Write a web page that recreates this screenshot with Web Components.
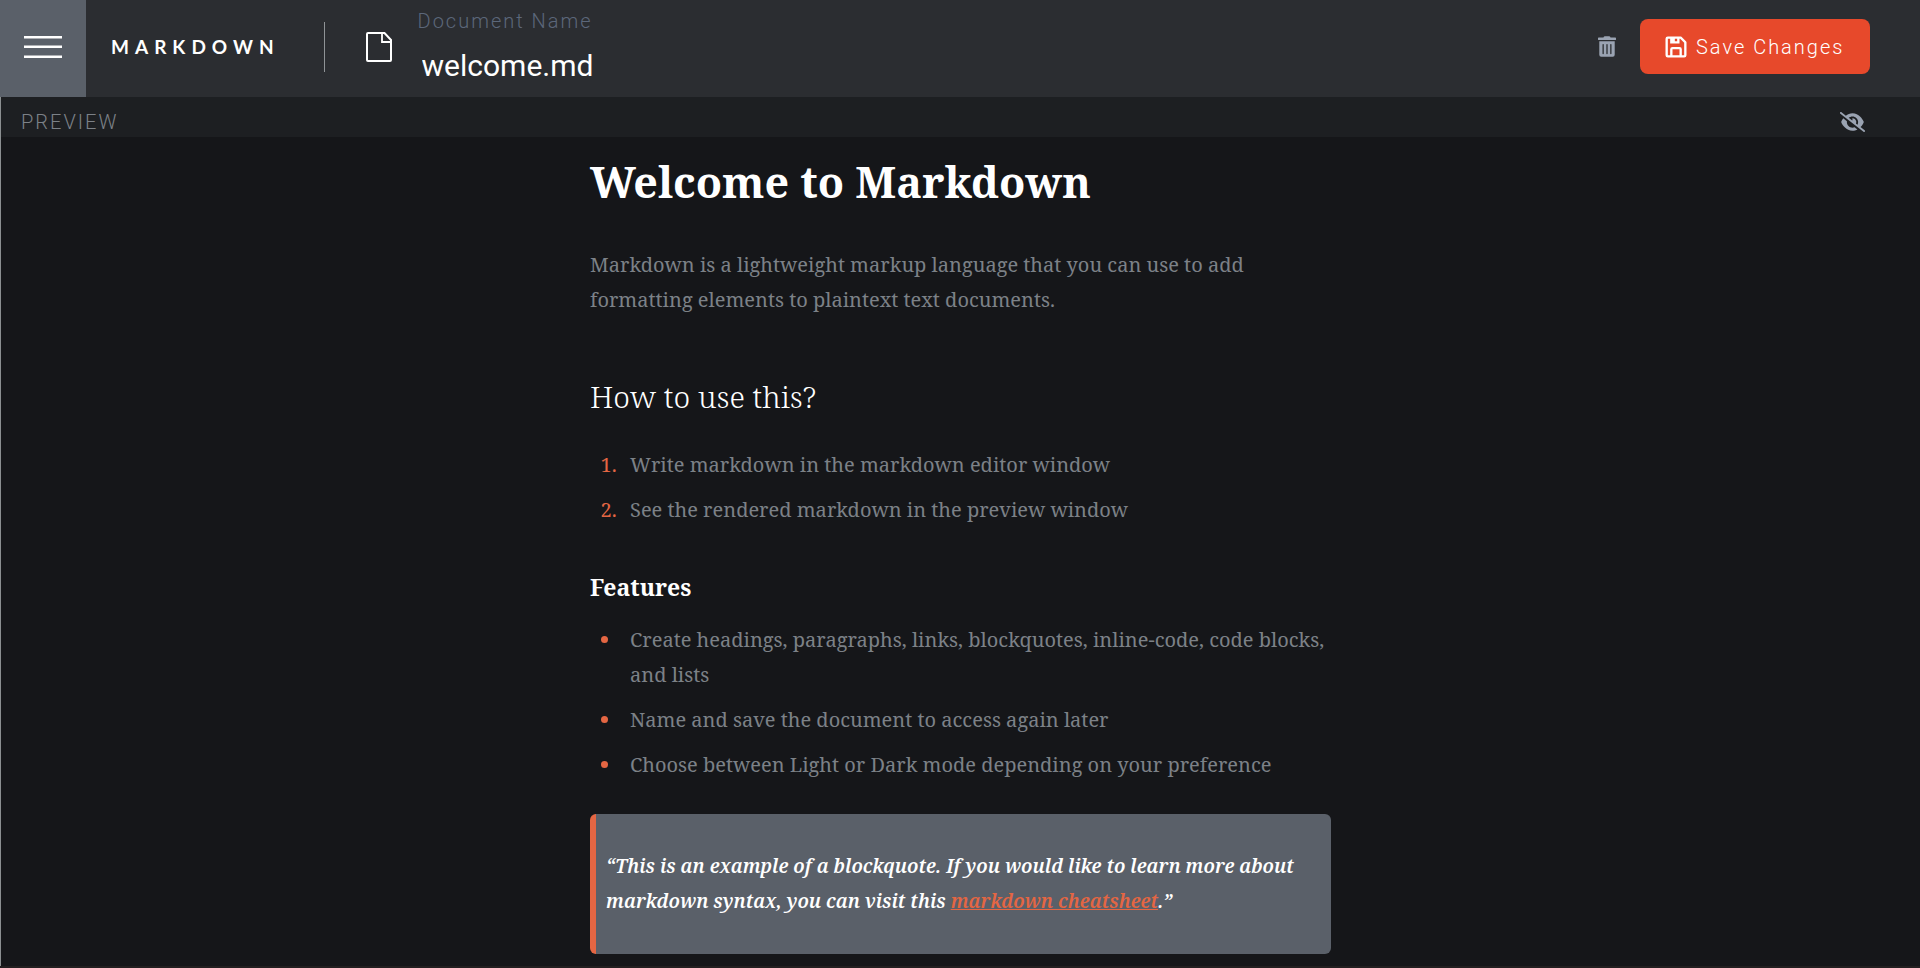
<!DOCTYPE html>
<html lang="en">
<head>
<meta charset="utf-8">
<meta name="viewport" content="width=device-width, initial-scale=1">
<title>Markdown</title>
<style>
  :root {
    --bg: #151619;
    --bar: #2b2d31;
    --subbar: #1d1f22;
    --slate: #5a6069;
    --label: #5c677a;
    --muted: #7c8187;
    --icon: #9aa3b2;
    --accent: #e46643;
    --action: #e7492b;
  }
  body { margin: 0; background: var(--bg); color: #fff; font-family: Roboto, sans-serif; }
</style>
</head>
<body>
<md-app>
  <md-header slot="header">
    <md-logo slot="brand">MARKDOWN</md-logo>
    <md-filename slot="document" label="Document Name" value="welcome.md"></md-filename>
    <md-save slot="actions">Save Changes</md-save>
  </md-header>
  <md-pane heading="PREVIEW">
    <md-document></md-document>
  </md-pane>
</md-app>

<script>
class Base extends HTMLElement {
  connectedCallback() {
    if (this.shadowRoot) return;
    const t = document.createElement('template');
    t.innerHTML = `<style>*{box-sizing:border-box}button{border:0;padding:0;background:none;font:inherit;color:inherit;cursor:pointer}svg{display:block}</style>` + this.render();
    this.attachShadow({ mode: 'open' }).append(t.content.cloneNode(true));
  }
}

customElements.define('md-app', class extends Base {
  render() {
    return `<style>
      :host { display: flex; flex-direction: column; min-height: 100vh; box-sizing: border-box; border-bottom: 2px solid #231f20; }
      main { flex: 1; display: flex; flex-direction: column; }
    </style>
    <slot name="header"></slot><main><slot></slot></main>`;
  }
});

customElements.define('md-header', class extends Base {
  render() {
    return `<style>
      :host { display: block; }
      header { display: flex; align-items: stretch; min-height: 97px; padding-right: 50px; background: var(--bar); }
      .menu { width: 86px; display: grid; place-items: center; padding-bottom: 4px; background: var(--slate); }
      .content { flex: 1; display: flex; align-items: center; padding: 0 0 4px 25px; }
      .rule { width: 1px; height: 50px; margin: 0 41px 0 44px; background: #8f9396; }
      .actions { display: flex; align-items: center; gap: 24px; margin-left: auto; }
      .trash { color: var(--icon); }
    </style>
    <header>
      <button class="menu" aria-label="Toggle menu">
        <svg width="38" height="22" viewBox="0 0 38 22" fill="#fff"><path d="M0 0h38v2.4H0zM0 9.4h38v2.6H0zM0 19.4h38v2.6H0z"/></svg>
      </button>
      <div class="content">
        <slot name="brand"></slot>
        <span class="rule"></span>
        <slot name="document"></slot>
        <div class="actions">
          <button class="trash" aria-label="Delete document">
            <svg width="18" height="21" viewBox="0 0 448 512" fill="currentColor"><path d="M32 464a48 48 0 0 0 48 48h288a48 48 0 0 0 48-48V128H32zm272-256a16 16 0 0 1 32 0v224a16 16 0 0 1-32 0zm-96 0a16 16 0 0 1 32 0v224a16 16 0 0 1-32 0zm-96 0a16 16 0 0 1 32 0v224a16 16 0 0 1-32 0zM432 32H312l-9.400-18.700A24 24 0 0 0 281.100 0H166.800a23.720 23.720 0 0 0-21.400 13.300L136 32H16A16 16 0 0 0 0 48v32a16 16 0 0 0 16 16h416a16 16 0 0 0 16-16V48a16 16 0 0 0-16-16z"/></svg>
          </button>
          <slot name="actions"></slot>
        </div>
      </div>
    </header>`;
  }
});

customElements.define('md-logo', class extends Base {
  render() {
    return `<style>
      :host { display: block; font: 700 19px/24px Lato, sans-serif; letter-spacing: 6px; }
    </style><slot></slot>`;
  }
});

customElements.define('md-filename', class extends Base {
  render() {
    return `<style>
      :host { display: flex; align-items: center; gap: 26px; }
      .field { display: flex; flex-direction: column; gap: 8px; }
      label { font-size: 20px; line-height: 30px; font-weight: 300; letter-spacing: 2px; color: var(--label); }
      input { width: 320px; height: 44px; padding: 0 4px; border: 0; background: none; color: #fff; font: 400 30px/44px Roboto, sans-serif; outline: 0; }
    </style>
    <svg width="26" height="30" viewBox="0 0 26 30" fill="none" stroke="#fff" stroke-width="2"><path d="M1 2v26q0 1 1 1h22q1 0 1-1V8l-6.500-7H2q-1 0-1 1z"/><path d="M16 1v9h9" stroke-width="1.800"/></svg>
    <div class="field">
      <label for="name">${this.getAttribute('label')}</label>
      <input id="name" type="text" value="${this.getAttribute('value')}">
    </div>`;
  }
});

customElements.define('md-save', class extends Base {
  render() {
    return `<style>
      :host { display: block; }
      button { display: flex; align-items: center; gap: 6px; min-width: 230px; height: 55px; padding: 0 22px; border-radius: 8px; background: var(--action); color: #fff; font: 300 20px/24px Roboto, sans-serif; letter-spacing: 2px; }
    </style>
    <button type="button">
      <svg width="28" height="28" viewBox="0 0 24 24" fill="currentColor"><path d="M5 21h14a2 2 0 0 0 2-2V8a1 1 0 0 0-.29-.71l-4-4A1 1 0 0 0 16 3H5a2 2 0 0 0-2 2v14a2 2 0 0 0 2 2zm10-2H9v-5h6zM13 7h-2V5h2zM5 5h2v4h8V5h.59L19 8.410V19h-2v-5a2 2 0 0 0-2-2H9a2 2 0 0 0-2 2v5H5z"/></svg>
      <span><slot></slot></span>
    </button>`;
  }
});

customElements.define('md-pane', class extends Base {
  render() {
    return `<style>
      :host { display: flex; flex-direction: column; flex: 1; border-left: 1px solid #8b8f91; }
      .bar { display: flex; align-items: center; justify-content: space-between; height: 40px; padding: 9px 55px 0 20px; background: var(--subbar); }
      h2 { margin: 0; font-size: 20px; line-height: 30px; font-weight: 300; letter-spacing: 2px; color: var(--muted); }
      button { color: var(--icon); }
      .body { padding: 15px 20px 12px; }
    </style>
    <div class="bar">
      <h2>${this.getAttribute('heading')}</h2>
      <button aria-label="Toggle preview">
        <svg width="25" height="20" viewBox="0 0 640 512" fill="currentColor"><path d="M38.800 5.100C28.400-3.100 13.300-1.200 5.100 9.200S-1.200 34.700 9.200 42.900l592 464c10.400 8.200 25.500 6.300 33.700-4.100s6.300-25.500-4.100-33.700L525.600 386.700c39.600-40.600 66.400-86.100 79.900-118.400c3.300-7.900 3.300-16.700 0-24.600c-14.900-35.700-46.200-87.700-93-131.100C465.500 68.800 400.800 32 320 32c-68.200 0-125 26.300-169.300 60.800L38.800 5.100zM223.100 149.500C248.600 126.200 282.700 112 320 112c79.500 0 144 64.500 144 144c0 24.900-6.300 48.300-17.400 68.700L408 294.500c8.400-19.300 10.600-41.400 4.800-63.300c-11.100-41.500-47.800-69.400-88.600-71.100c-5.800-.2-9.200 6.100-7.400 11.700c2.100 6.400 3.300 13.200 3.300 20.300c0 10.200-2.400 19.800-6.600 28.300l-90.300-70.800zM373 389.900c-16.400 6.500-34.300 10.100-53 10.100c-79.500 0-144-64.500-144-144c0-6.900 .5-13.600 1.400-20.200L83.100 161.500C60.300 191.200 44 220.900 34.500 243.700c-3.300 7.900-3.300 16.700 0 24.600c14.900 35.700 46.200 87.700 93 131.100C174.500 443.200 239.200 480 320 480c47.800 0 89.900-12.900 126.200-32.500L373 389.900z"/></svg>
      </button>
    </div>
    <div class="body"><slot></slot></div>`;
  }
});

customElements.define('md-document', class extends Base {
  render() {
    return `<style>
      :host { display: block; max-width: 741px; margin: 0 auto; font: 400 20px/35px "Roboto Slab", "Noto Serif", serif; color: var(--muted); }
      h1, h2, h3 { margin: 0; color: #fff; }
      h1 { font-size: 43px; line-height: 60px; font-weight: 700; }
      h2 { font-size: 30px; line-height: 40px; font-weight: 300; }
      h3 { font-size: 23px; line-height: 30px; font-weight: 700; }
      h1 + p { margin: 35px 0 60px; }
      ol, ul { display: flex; flex-direction: column; gap: 10px; margin: 0; padding-left: 32px; }
      li { padding-left: 8px; }
      ol { margin: 30px 0 45px; }
      ul { margin: 20px 0 32px; }
      li::marker { color: var(--accent); }
      blockquote { margin: 0; padding: 35px 20px 35px 10px; border-left: 6px solid var(--accent); border-radius: 6px; background: var(--slate); color: #fff; font-size: 19px; font-weight: 600; font-style: italic; }
      blockquote p { margin: 0; }
      a { color: var(--accent); }
    </style>
    <h1>Welcome to Markdown</h1>
    <p>Markdown is a lightweight markup language that you can use to add formatting elements to plaintext text documents.</p>
    <h2>How to use this?</h2>
    <ol>
      <li>Write markdown in the markdown editor window</li>
      <li>See the rendered markdown in the preview window</li>
    </ol>
    <h3>Features</h3>
    <ul>
      <li>Create headings, paragraphs, links, blockquotes, inline-code, code blocks, and lists</li>
      <li>Name and save the document to access again later</li>
      <li>Choose between Light or Dark mode depending on your preference</li>
    </ul>
    <blockquote>
      <p>“This is an example of a blockquote. If you would like to learn more about markdown syntax, you can visit this <a href="#cheatsheet">markdown cheatsheet</a>.”</p>
    </blockquote>`;
  }
});
</script>
</body>
</html>
